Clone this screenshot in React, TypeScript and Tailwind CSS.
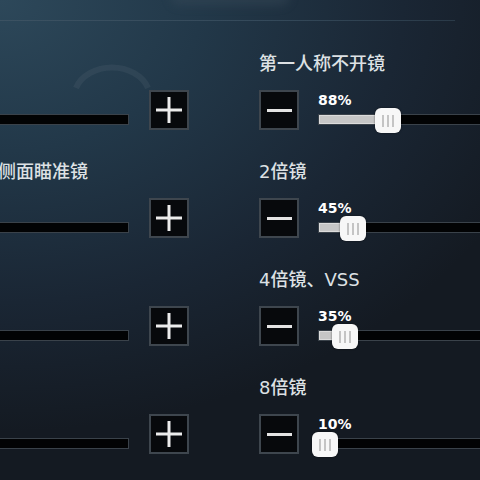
import React from "react";

type Item = { title: string; value: number };

const leftItems: Item[] = [
  { title: "第三人称不开镜", value: 90 },
  { title: "红点、全息、机瞄、侧面瞄准镜", value: 50 },
  { title: "3倍镜", value: 30 },
  { title: "6倍镜", value: 15 },
];

const rightItems: Item[] = [
  { title: "第一人称不开镜", value: 88 },
  { title: "2倍镜", value: 45 },
  { title: "4倍镜、VSS", value: 35 },
  { title: "8倍镜", value: 10 },
];

function StepBox({ kind }: { kind: "minus" | "plus" }) {
  return (
    <div className="w-[40px] h-[40px] shrink-0 bg-[#07090c] border-2 border-[#3e464e] flex items-center justify-center">
      {kind === "minus" ? (
        <div className="w-[25px] h-[3px] bg-[#e4e4e4]" />
      ) : (
        <svg width="26" height="26" viewBox="0 0 26 26">
          <rect x="0" y="11.5" width="26" height="3" fill="#ececec" />
          <rect x="11.5" y="0" width="3" height="26" fill="#ececec" />
        </svg>
      )}
    </div>
  );
}

function Slider({ value }: { value: number }) {
  // thumb offset relative to track start, in px
  const thumbLeft = -15 + value * 0.81;
  const fill = Math.max(thumbLeft + 13, 0);
  return (
    <div className="w-[234px] shrink-0 ml-[19px]">
      <div className="mt-[2px] h-[16px] leading-[16px] text-[14px] font-bold text-white font-['DejaVu_Sans',sans-serif]">
        {value}%
      </div>
      <div className="relative mt-[6px] h-[11px] bg-[#020304] border border-[#3a424a]">
        <div
          className="absolute left-0 top-0 bottom-0 bg-[#c6c6c6] border border-[#dcdcdc]"
          style={{ width: fill }}
        />
        <div
          className="absolute top-[-7px] w-[26px] h-[25px] rounded-[6px] bg-[#f7f7f7] flex items-center justify-center gap-[3px] shadow-[0_0_2px_rgba(0,0,0,0.6)]"
          style={{ left: thumbLeft }}
        >
          <div className="w-[2px] h-[12px] bg-[#c4c4c4]" />
          <div className="w-[2px] h-[12px] bg-[#c4c4c4]" />
          <div className="w-[2px] h-[12px] bg-[#c4c4c4]" />
        </div>
      </div>
    </div>
  );
}

function Column({ items }: { items: Item[] }) {
  return (
    <div className="flex flex-col w-[353px] shrink-0">
      {items.map((it) => (
        <div key={it.title} className="h-[108px]">
          <div className="h-[24px] leading-[24px] text-[18px] font-medium text-[#dde1e4] whitespace-nowrap font-['DejaVu_Sans','Noto_Sans_CJK_SC',sans-serif]">
            {it.title}
          </div>
          <div className="mt-[14px] flex items-start">
            <StepBox kind="minus" />
            <Slider value={it.value} />
            <div className="ml-[20px]">
              <StepBox kind="plus" />
            </div>
          </div>
        </div>
      ))}
    </div>
  );
}

export default function App() {
  return (
    <div className="relative w-[480px] h-[480px] overflow-hidden bg-[radial-gradient(ellipse_120%_90%_at_0%_0%,#2d485a_0%,#223849_35%,#1a2634_70%,#141a22_100%)]">
      {/* background decor */}
      <div className="absolute left-0 top-[20px] w-[455px] h-[1px] bg-[linear-gradient(90deg,#3c5262,#34495a_60%,#2a3a48)]" />
      <div className="absolute left-[170px] top-[-14px] w-[120px] h-[20px] rounded-full bg-[#3a4c5a]/40 blur-[4px]" />
      <svg className="absolute left-[70px] top-[52px]" width="84" height="40" viewBox="0 0 84 40">
        <path d="M6 36 A38 30 0 0 1 78 36" fill="none" stroke="#ffffff" strokeOpacity="0.05" strokeWidth="6" />
      </svg>

      <div className="relative flex gap-[70px] ml-[-164px] pt-[52px]">
        <Column items={leftItems} />
        <Column items={rightItems} />
      </div>
    </div>
  );
}
